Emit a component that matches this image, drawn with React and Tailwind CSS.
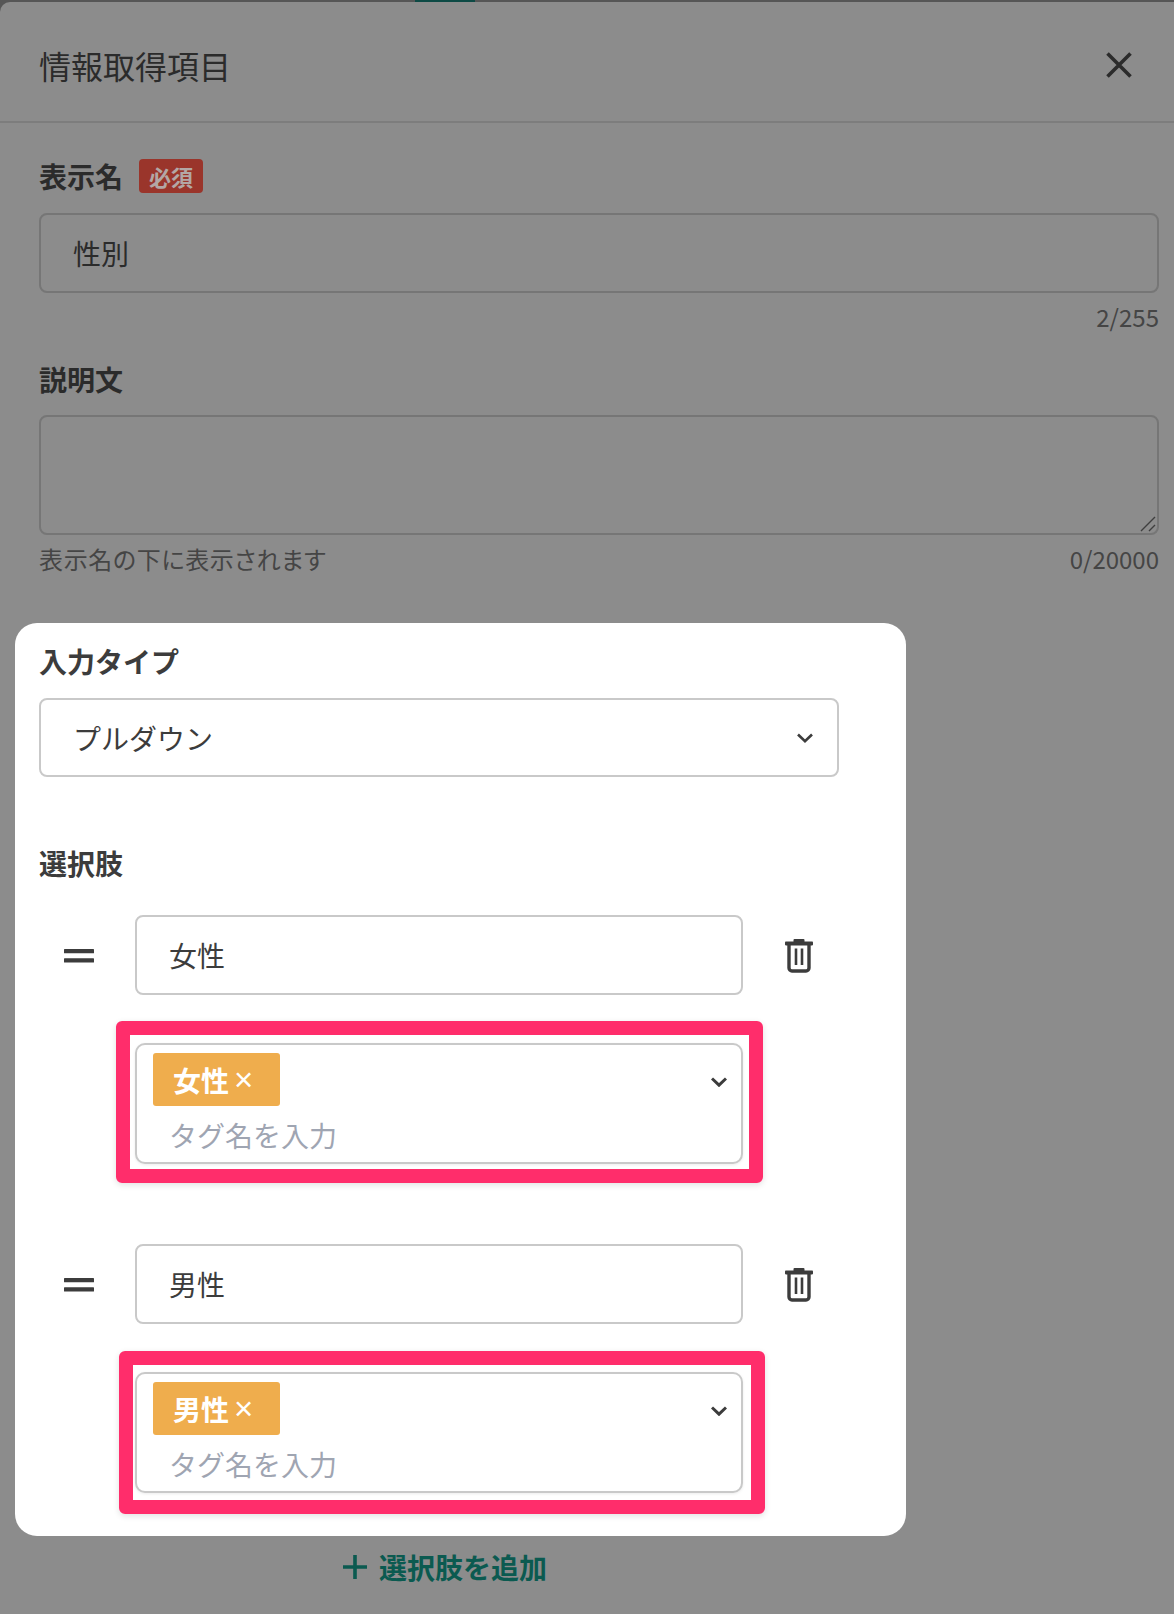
import React from "react";

const FONT = "font-['Noto_Sans_CJK_JP','Noto_Sans',sans-serif]";

function Chevron({ className, sw = "2.6" }) {
  return (
    <svg className={className} viewBox="0 0 16 10" fill="none" stroke="#3c3c3c" strokeWidth={sw}>
      <path d="M1 1.5 L8 8.2 L15 1.5" />
    </svg>
  );
}

function Trash() {
  return (
    <svg className="w-[28px] h-[34px] shrink-0" viewBox="0 0 28 34" fill="none">
      <rect x="8.5" y="0" width="11" height="4" rx="1" fill="#3c3c3c" />
      <rect x="0" y="2.6" width="28" height="3.8" rx="0.8" fill="#3c3c3c" />
      <path d="M4 5 V29 a3 3 0 0 0 3 3 h14 a3 3 0 0 0 3-3 V5" stroke="#3c3c3c" strokeWidth="3.4" />
      <path d="M11 9.5 V26 M17 9.5 V26" stroke="#3c3c3c" strokeWidth="2.6" />
    </svg>
  );
}

function Drag() {
  return (
    <svg className="w-[30px] h-[14px] shrink-0 mt-[2px]" viewBox="0 0 30 14" fill="#3c3c3c">
      <rect x="0" y="0" width="30" height="4.3" rx="0.6" />
      <rect x="0" y="9.3" width="30" height="4.3" rx="0.6" />
    </svg>
  );
}

function OptionRow({ value }) {
  return (
    <div className="flex items-center h-[80px]">
      <div className="w-[96px] pl-[25px] shrink-0 flex">
        <Drag />
      </div>
      <div className="w-[608px] h-[80px] border-2 border-[#c9c9c9] rounded-[8px] pl-[32px] flex items-center text-[28px] text-[#3c3c3c]">
        {value}
      </div>
      <div className="ml-[42px] mt-[2px]">
        <Trash />
      </div>
    </div>
  );
}

function TagSelect({ tag }) {
  return (
    <div className="relative w-[608px] h-[121px] border-2 border-[#c9c9c9] rounded-[10px] bg-white pl-[16px] pt-[8px] shadow-[0_1px_3px_rgba(0,0,0,0.08)]">
      <div className="w-[127px] h-[53px] bg-[#efad4d] rounded-[3px] pl-[20px] flex items-center text-white">
        <span className="text-[28px] font-bold leading-none">{tag}</span>
        <span className="ml-[5px] text-[33px] leading-none font-['Liberation_Sans',sans-serif]">×</span>
      </div>
      <div className="pl-[16px] mt-[9px] text-[28px] leading-[40px] text-[#9fa5b2]">タグ名を入力</div>
      <Chevron sw="3" className="absolute right-[14px] top-[32px] w-[16px] h-[10px]" />
    </div>
  );
}

export default function App() {
  return (
    <div className={`relative w-[1174px] h-[1614px] overflow-hidden bg-[#565656] pt-[2px] ${FONT}`}>
      <div className="absolute left-[415px] top-0 w-[60px] h-[2px] bg-[#0d4a45]" />
      <div className="h-[1612px] bg-[#8c8c8c] rounded-tl-[10px]">
        <header className="h-[121px] border-b-2 border-[#7d7d7d] flex items-center justify-between pl-[39px] pr-[42px] pt-[7px]">
          <h1 className="text-[32px] text-[#2b2b2b] font-normal">情報取得項目</h1>
          <svg className="w-[26px] h-[26px]" viewBox="0 0 26 26" fill="none" stroke="#2b2b2b" strokeWidth="3.6">
            <path d="M1.5 1.5 L24.5 24.5 M24.5 1.5 L1.5 24.5" />
          </svg>
        </header>

        <main className="pl-[39px] pr-[15px] pt-[36px]">
          <div className="flex items-center h-[34px]">
            <span className="text-[28px] font-bold text-[#2b2b2b]">表示名</span>
            <span className="ml-[16px] w-[64px] h-[34px] rounded-[4px] bg-[#9a352b] text-[#b3a7a5] text-[22px] font-bold flex items-center justify-center">必須</span>
          </div>
          <div className="mt-[20px] h-[80px] border-2 border-[#767676] rounded-[8px] pl-[32px] flex items-center text-[28px] text-[#2b2b2b]">性別</div>
          <div className="mt-[8px] h-[32px] flex items-center justify-end text-[24px] text-[#454545]">2/255</div>

          <div className="mt-[29px] h-[34px] flex items-center text-[28px] font-bold text-[#2b2b2b]">説明文</div>
          <div className="relative mt-[19px] h-[120px] border-2 border-[#767676] rounded-[8px]">
            <svg className="absolute right-[1px] bottom-[1px] w-[16px] h-[16px]" viewBox="0 0 16 16" stroke="#3f3f3f" strokeWidth="1.4">
              <path d="M1 15 L15 1 M9 15 L15 9" />
            </svg>
          </div>
          <div className="mt-[8px] h-[32px] flex items-center justify-between text-[#454545]">
            <span className="text-[24px] [font-feature-settings:'palt'] tracking-[0.65px]">表示名の下に表示されます</span>
            <span className="text-[24px]">0/20000</span>
          </div>

          <section className="-ml-[24px] mt-[48px] w-[891px] h-[913px] bg-white rounded-[22px] pl-[24px] pt-[21px] text-[#3c3c3c]">
            <div className="h-[34px] flex items-center text-[28px] font-bold">入力タイプ</div>
            <div className="mt-[20px] w-[800px] h-[79px] border-2 border-[#c9c9c9] rounded-[8px] pl-[33px] pr-[24px] flex items-center justify-between text-[28px]">
              <span className="-ml-[1px]">プルダウン</span>
              <Chevron className="w-[16px] h-[10px]" />
            </div>

            <div className="mt-[69px] h-[34px] flex items-center text-[28px] font-bold">選択肢</div>

            <div className="mt-[35px]">
              <OptionRow value="女性" />
            </div>
            <div className="mt-[26px] ml-[77px] w-[647px] h-[162px] border-[14px] border-[#ff2d6b] rounded-[6px] pl-[5px] pt-[8px] shadow-[0_2px_6px_rgba(0,0,0,0.12)]">
              <TagSelect tag="女性" />
            </div>

            <div className="mt-[61px]">
              <OptionRow value="男性" />
            </div>
            <div className="mt-[27px] ml-[80px] w-[646px] h-[163px] border-[14px] border-[#ff2d6b] rounded-[6px] pl-[2px] pt-[7px] shadow-[0_2px_6px_rgba(0,0,0,0.12)]">
              <TagSelect tag="男性" />
            </div>
          </section>

          <div className="mt-[13px] h-[36px] ml-[304px] flex items-center text-[#0b5a50]">
            <svg className="w-[24px] h-[24px]" viewBox="0 0 24 24" stroke="#0b5a50" strokeWidth="3.6">
              <path d="M12 0 V24 M0 12 H24" />
            </svg>
            <span className="ml-[12px] text-[28px] font-bold">選択肢を追加</span>
          </div>
        </main>
      </div>
    </div>
  );
}
